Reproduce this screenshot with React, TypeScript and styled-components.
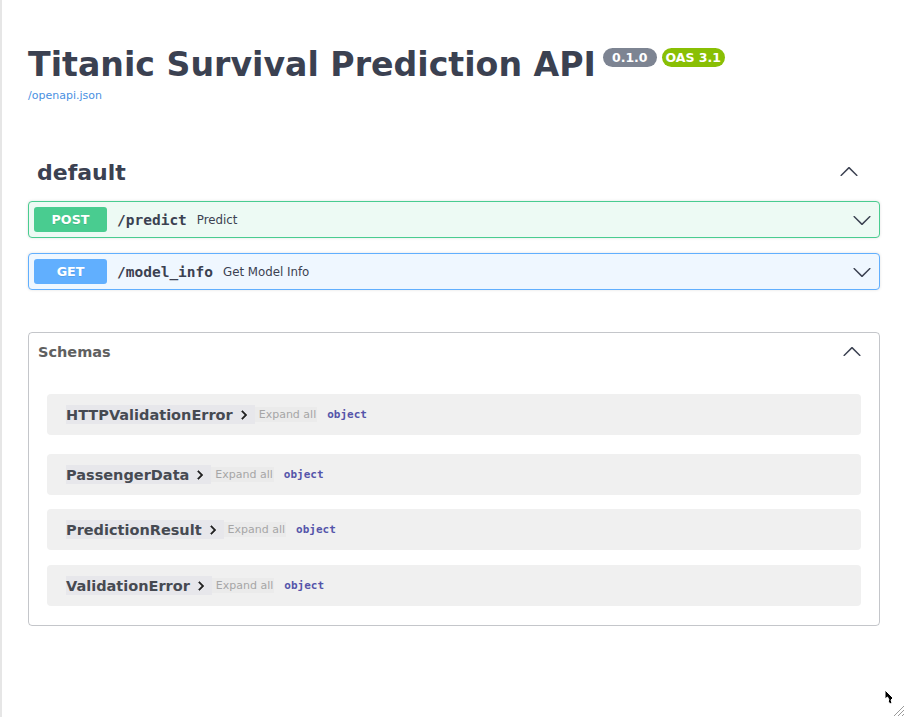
import React from "react";
import styled, { createGlobalStyle } from "styled-components";

const GlobalStyle = createGlobalStyle`
  html, body { margin: 0; padding: 0; background: #fff; }
  body { font-family: "DejaVu Sans", sans-serif; color: #3b4151; }
  * { box-sizing: border-box; }
`;

const Page = styled.div`
  min-height: 717px;
  width: 905px;
  border-left: 2px solid #e6e6e6;
  padding: 46px 25px 0 26px;
  position: relative;
`;

const Info = styled.header`
  display: flex;
  flex-direction: column;
  align-items: flex-start;
`;

const TitleRow = styled.div`
  display: flex;
  align-items: flex-start;
`;

const Title = styled.h2`
  margin: 0;
  font-size: 33.2px;
  line-height: 38px;
  font-weight: bold;
  color: #3b4151;
  font-family: "DejaVu Sans", sans-serif;
`;

const Badge = styled.span<{ $bg: string; $pad: number }>`
  display: inline-block;
  margin: 2px 0 0 ${(p) => (p.$pad > 6 ? 7 : 5)}px;
  padding: 2px ${(p) => p.$pad}px;
  border-radius: 57px;
  background: ${(p) => p.$bg};
  color: #fff;
  font-size: 12.5px;
  line-height: 15px;
  font-weight: bold;
  font-family: "DejaVu Sans", sans-serif;
`;

const SpecLink = styled.a`
  display: block;
  margin-top: 6px;
  font-size: 11px;
  line-height: 12px;
  color: #4990e2;
  text-decoration: none;
`;

const TagSection = styled.section`
  margin-top: 48px;
`;

const TagHeader = styled.div`
  display: flex;
  align-items: center;
  justify-content: space-between;
  height: 44px;
  padding: 0 21px 0 9px;
  margin-bottom: 7px;
`;

const TagName = styled.h3`
  margin: 0;
  font-size: 22px;
  font-weight: bold;
  color: #3b4151;
`;

const Chevron = styled.svg<{ $color?: string }>`
  width: 20px;
  height: 20px;
  fill: ${(p) => p.$color ?? "#3b4151"};
  flex: none;
`;

const OpBlock = styled.div<{ $border: string; $bg: string }>`
  display: flex;
  align-items: center;
  height: 37px;
  padding: 5px 7px 5px 5px;
  margin-bottom: 15px;
  border: 1px solid ${(p) => p.$border};
  background: ${(p) => p.$bg};
  border-radius: 4px;
  box-shadow: 0 0 3px rgba(0, 0, 0, 0.12);
`;

const Method = styled.span<{ $bg: string }>`
  display: flex;
  align-items: center;
  justify-content: center;
  width: 73px;
  height: 25px;
  border-radius: 3px;
  background: ${(p) => p.$bg};
  color: #fff;
  font-size: 12.7px;
  font-weight: bold;
  text-shadow: 0 1px 0 rgba(0, 0, 0, 0.1);
`;

const Path = styled.span`
  margin-left: 10px;
  font-family: "DejaVu Sans Mono", monospace;
  font-size: 14.5px;
  font-weight: bold;
  color: #3b4151;
`;

const Summary = styled.span`
  margin-left: 10px;
  flex: 1;
  font-size: 11.8px;
  color: #3b4151;
`;

const Models = styled.section`
  margin-top: 42px;
  border: 1px solid rgba(59, 65, 81, 0.3);
  border-radius: 4px;
  padding-bottom: 19px;
`;

const ModelsHeader = styled.div`
  display: flex;
  align-items: center;
  justify-content: space-between;
  height: 37px;
  padding: 0 17px 0 9px;
  margin-bottom: 24px;
`;

const ModelsTitle = styled.h4`
  margin: 0;
  font-size: 14.5px;
  font-weight: bold;
  color: #606060;
`;

const ModelRow = styled.div<{ $gap: number }>`
  display: flex;
  align-items: center;
  height: 41px;
  margin: 0 18px ${(p) => p.$gap}px;
  padding-left: 19px;
  background: #f0f0f0;
  border-radius: 4px;
`;

const ModelToggle = styled.span`
  display: flex;
  align-items: center;
  height: 19px;
  padding-right: 2px;
  background: #e7e7eb;
  font-size: 14.5px;
  font-weight: bold;
  color: #464a52;
`;

const ToggleArrow = styled.svg`
  width: 18px;
  height: 18px;
  margin-left: 2px;
  fill: #202020;
  stroke: #202020;
  stroke-width: 0.6;
`;

const ExpandAll = styled.span`
  display: flex;
  align-items: center;
  height: 15px;
  padding: 0 1px 0 4px;
  background: #ebebeb;
  font-size: 11px;
  color: #a6a6a6;
`;

const TypeName = styled.span`
  margin-left: 10px;
  font-family: "DejaVu Sans Mono", monospace;
  font-size: 11px;
  font-weight: bold;
  color: #55a;
`;

const Grip = styled.svg`
  position: fixed;
  right: 0;
  bottom: 0;
  width: 14px;
  height: 14px;
  stroke: #9a9a9a;
  stroke-width: 1;
`;

const Cursor = styled.svg`
  position: fixed;
  left: 884px;
  top: 689px;
  width: 12px;
  height: 17px;
`;

const ArrowDown = () => (
  <Chevron viewBox="0 0 20 20">
    <path d="M17.418 6.109c.272-.268.709-.268.979 0s.271.701 0 .969l-7.908 7.83c-.27.268-.707.268-.979 0l-7.908-7.83c-.27-.268-.27-.701 0-.969.271-.268.709-.268.979 0L10 13.25l7.418-7.141z" />
  </Chevron>
);

const ArrowUp = () => (
  <Chevron viewBox="0 0 20 20">
    <path d="M2.582 13.891c-.272.268-.709.268-.979 0s-.271-.701 0-.969l7.908-7.83c.27-.268.707-.268.979 0l7.908 7.83c.27.268.27.701 0 .969-.271.268-.709.268-.979 0L10 6.75l-7.418 7.141z" />
  </Chevron>
);

const ops = [
  { method: "POST", path: "/predict", summary: "Predict", color: "#49cc90", bg: "#edfaf4" },
  { method: "GET", path: "/model_info", summary: "Get Model Info", color: "#61affe", bg: "#eff7ff" },
];

const models = [
  { name: "HTTPValidationError", gap: 19 },
  { name: "PassengerData", gap: 14 },
  { name: "PredictionResult", gap: 15 },
  { name: "ValidationError", gap: 0 },
];

export default function App() {
  return (
    <>
      <GlobalStyle />
      <Page>
        <Info>
          <TitleRow>
            <Title>Titanic Survival Prediction API</Title>
            <Badge $bg="#7d8492" $pad={9}>0.1.0</Badge>
            <Badge $bg="#89bf04" $pad={4}>OAS 3.1</Badge>
          </TitleRow>
          <SpecLink href="#">/openapi.json</SpecLink>
        </Info>

        <TagSection>
          <TagHeader>
            <TagName>default</TagName>
            <ArrowUp />
          </TagHeader>
          {ops.map((op) => (
            <OpBlock key={op.path} $border={op.color} $bg={op.bg}>
              <Method $bg={op.color}>{op.method}</Method>
              <Path>{op.path}</Path>
              <Summary>{op.summary}</Summary>
              <ArrowDown />
            </OpBlock>
          ))}
        </TagSection>

        <Models>
          <ModelsHeader>
            <ModelsTitle>Schemas</ModelsTitle>
            <ArrowUp />
          </ModelsHeader>
          {models.map((m) => (
            <ModelRow key={m.name} $gap={m.gap}>
              <ModelToggle>
                {m.name}
                <ToggleArrow viewBox="0 0 24 24">
                  <path d="M10 6L8.59 7.41 13.17 12l-4.58 4.59L10 18l6-6z" />
                </ToggleArrow>
              </ModelToggle>
              <ExpandAll>Expand all</ExpandAll>
              <TypeName>object</TypeName>
            </ModelRow>
          ))}
        </Models>

        <Cursor viewBox="0 0 12 17">
          <path d="M1 1 L1 10 L3.5 8 L5 11 L4 12 L6 15 L8 14 L7 11 L9 9 Z" fill="#000" stroke="#fff" strokeWidth="1" />
        </Cursor>
        <Grip viewBox="0 0 14 14">
          <line x1="13" y1="3" x2="3" y2="13" />
          <line x1="13" y1="7" x2="7" y2="13" />
          <line x1="13" y1="11" x2="11" y2="13" />
        </Grip>
      </Page>
    </>
  );
}
